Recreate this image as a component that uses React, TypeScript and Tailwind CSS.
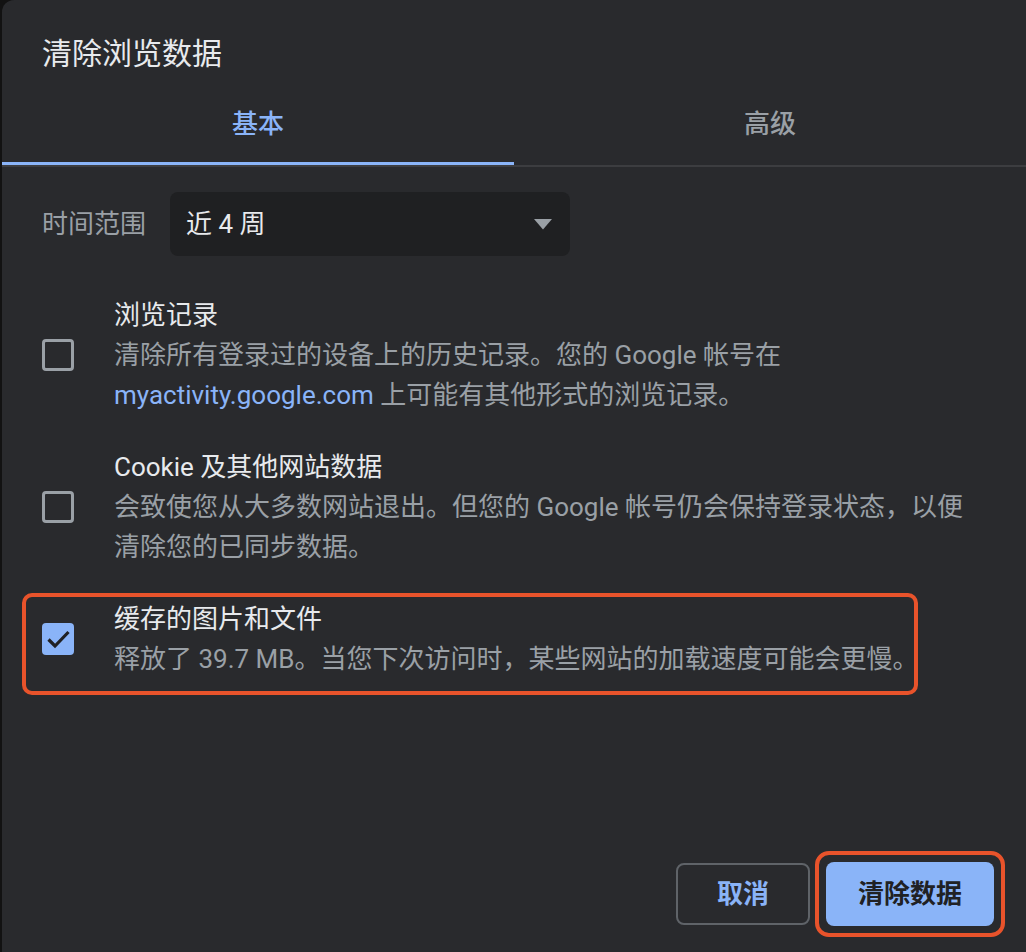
const items = [
  {
    title: "浏览记录",
    lines: [
      <>清除所有登录过的设备上的历史记录。您的 Google 帐号在</>,
      <>
        <span className="text-[#8ab4f8]">myactivity.google.com</span> 上可能有其他形式的浏览记录。
      </>,
    ],
    checked: false,
  },
  {
    title: "Cookie 及其他网站数据",
    lines: [
      <>会致使您从大多数网站退出。但您的 Google 帐号仍会保持登录状态，以便</>,
      <>清除您的已同步数据。</>,
    ],
    checked: false,
  },
  {
    title: "缓存的图片和文件",
    lines: [<>释放了 39.7 MB。当您下次访问时，某些网站的加载速度可能会更慢。</>],
    checked: true,
    highlight: true,
  },
];

function Checkbox({ checked }: { checked: boolean }) {
  if (checked) {
    return (
      <span className="grid place-items-center h-[32px] w-[32px] rounded-[4px] bg-[#8ab4f8] shrink-0">
        <svg width="32" height="32" viewBox="0 0 32 32">
          <path d="M6.5 16.5 L13 23 L26.5 9" fill="none" stroke="#202124" strokeWidth="3.2" />
        </svg>
      </span>
    );
  }
  return <span className="block h-[32px] w-[32px] rounded-[4px] border-[3px] border-[#9aa0a6] shrink-0" />;
}

export default function App() {
  return (
    <div
      className="min-h-screen bg-[#121212] pl-[2px] text-[#e8eaed]"
      style={{ fontFamily: 'Roboto, "Noto Sans CJK SC", sans-serif' }}
    >
      <div className="h-[952px] rounded-tl-[12px] bg-[#292a2d] flex flex-col">
        <h1 className="pl-[40px] pt-[35px] text-[30px] leading-[38px] font-normal">清除浏览数据</h1>

        <div className="mt-[13px] flex">
          <div className="flex-1 h-[79px] flex items-center justify-center border-b-[3px] border-[#8ab4f8] text-[26px] font-medium text-[#8ab4f8]">
            基本
          </div>
          <div className="flex-1 h-[79px] flex items-center justify-center border-b-[3px] border-transparent text-[26px] font-medium text-[#9aa0a6]">
            高级
          </div>
        </div>
        <div className="h-[2px] bg-[#3c3d40]" />

        <div className="pl-[40px] pt-[25px] flex items-center gap-[24px]">
          <span className="text-[26px] text-[#9aa0a6]">时间范围</span>
          <div className="w-[400px] h-[64px] rounded-[8px] bg-[#1f2022] flex items-center justify-between pl-[16px] pr-[18px]">
            <span className="text-[26px]">近 4 周</span>
            <svg width="18" height="11" viewBox="0 0 18 11">
              <path d="M0 0 H18 L9 10.5 Z" fill="#9aa0a6" />
            </svg>
          </div>
        </div>

        <div className="pl-[40px] pt-[39px] flex flex-col gap-[32px]">
          {items.map((it) => (
            <div key={it.title} className="relative flex items-center gap-[40px]">
              {it.highlight && (
                <span className="absolute left-[-20px] top-[-6px] w-[896px] h-[102px] rounded-[10px] border-[4px] border-[#e8532b]" />
              )}
              <Checkbox checked={it.checked} />
              <div className="text-[26px] leading-[40px]">
                <div className="text-[#e8eaed]">{it.title}</div>
                {it.lines.map((l, i) => (
                  <div key={i} className="text-[#9aa0a6] whitespace-nowrap">
                    {l}
                  </div>
                ))}
              </div>
            </div>
          ))}
        </div>

        <div className="mt-auto mb-[26px] pr-[32px] flex justify-end items-center gap-[16px]">
          <button className="w-[134px] h-[62px] rounded-[8px] border-[2px] border-[#5f6368] text-[26px] font-bold text-[#8ab4f8]">
            取消
          </button>
          <div className="relative">
            <span className="absolute left-[-11px] top-[-11px] right-[-11px] bottom-[-11px] rounded-[14px] border-[4px] border-[#e8532b]" />
            <button className="block w-[168px] h-[64px] rounded-[8px] bg-[#8ab4f8] text-[26px] font-bold text-[#202124]">
              清除数据
            </button>
          </div>
        </div>
      </div>
    </div>
  );
}
